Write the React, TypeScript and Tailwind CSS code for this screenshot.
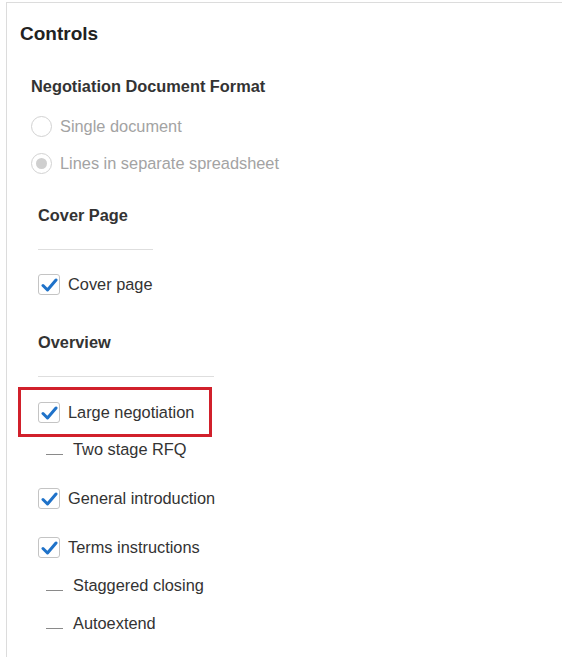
import { type ReactNode } from 'react'

const FONT = "font-['Liberation_Sans',Arial,sans-serif]"

function Check() {
  return (
    <span className="relative inline-flex h-[21px] w-[22px] shrink-0 rounded-[3px] border border-[#c4c4c4] bg-white">
      <svg className="absolute left-[2px] top-[2px]" width="17" height="16" viewBox="0 0 17 16" fill="none">
        <path d="M2 8.5l4.5 4.5L15 3" stroke="#1f72c9" strokeWidth="3" strokeLinecap="round" strokeLinejoin="round" />
      </svg>
    </span>
  )
}

function Radio({ on }: { on?: boolean }) {
  return (
    <span className="inline-flex h-[21px] w-[21px] shrink-0 items-center justify-center rounded-full border border-[#d2d2d2] bg-white">
      {on && <span className="h-[11px] w-[11px] rounded-full bg-[#cfcfcf]" />}
    </span>
  )
}

function CheckRow({ children }: { children: ReactNode }) {
  return (
    <div className="flex h-6 items-center gap-2 text-[16.35px] text-[#333]">
      <Check />
      <span>{children}</span>
    </div>
  )
}

function SubRow({ children }: { children: ReactNode }) {
  return (
    <div className="flex h-6 items-center pl-2 text-[16.35px] text-[#333]">
      <span className="mt-[10px] h-px w-[17px] bg-[#8a8a8a]" />
      <span className="ml-[10px]">{children}</span>
    </div>
  )
}

export default function App() {
  return (
    <div className={`${FONT} h-[657px] w-[562px] overflow-hidden bg-white pl-[6px] pt-[2px]`}>
      <div className="flex h-full flex-col border-l border-t border-[#dcdcdc] pl-[13px] pt-[19px]">
        <h1 className="text-[19px] font-bold leading-6 text-[#222]">Controls</h1>

        <div className="mt-[28px] pl-[11px]">
          <h2 className="text-[16.35px] font-bold leading-6 text-[#333]">Negotiation Document Format</h2>
          <div className="mt-[10px] flex h-[37px] items-center gap-2 text-[16.35px] text-[#a3a3a3]">
            <Radio />
            <span>Single document</span>
          </div>
          <div className="flex h-[37px] items-center gap-2 text-[16.35px] text-[#a3a3a3]">
            <Radio on />
            <span>Lines in separate spreadsheet</span>
          </div>
        </div>

        <div className="pl-[18px]">
          <h2 className="mt-[21px] text-[16.35px] font-bold leading-6 text-[#333]">Cover Page</h2>
          <div className="mt-[22px] h-px w-[115px] bg-[#dedede]" />
          <div className="mt-[22px]">
            <CheckRow>Cover page</CheckRow>
          </div>

          <h2 className="mt-[34px] text-[16.35px] font-bold leading-6 text-[#333]">Overview</h2>
          <div className="mt-[22px] h-px w-[176px] bg-[#dedede]" />
        </div>

        <div className="ml-[-2px] mt-[10px] w-[194px] border-[3px] border-[#d1202b] py-[10px] pl-[17px]">
          <CheckRow>Large negotiation</CheckRow>
        </div>

        <div className="pl-[18px]">
          <SubRow>Two stage RFQ</SubRow>
          <div className="mt-[25px]">
            <CheckRow>General introduction</CheckRow>
          </div>
          <div className="mt-[25px]">
            <CheckRow>Terms instructions</CheckRow>
          </div>
          <div className="mt-[14px]">
            <SubRow>Staggered closing</SubRow>
          </div>
          <div className="mt-[14px]">
            <SubRow>Autoextend</SubRow>
          </div>
        </div>
      </div>
    </div>
  )
}
